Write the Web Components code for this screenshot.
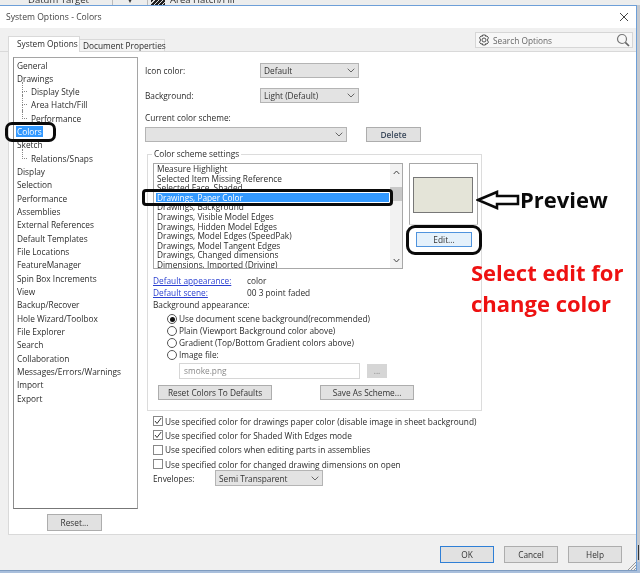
<!DOCTYPE html>
<html><head><meta charset="utf-8">
<style>
html,body{margin:0;padding:0}
body{width:640px;height:573px;overflow:hidden;background:linear-gradient(#c6c9ce 0 98%,#a9bfdc 98%);font:8.3px "Open Sans",sans-serif;color:#2b2b2b;position:relative}
sys-dialog,note-layer,top-strip{filter:blur(.3px)}
</style></head><body>
<top-strip></top-strip>
<sys-dialog>
  <span slot="title">System Options - Colors</span>
  <option-tree slot="tree">
    <tree-item>General</tree-item><tree-item>Drawings</tree-item>
    <tree-item child more>Display Style</tree-item><tree-item child more>Area Hatch/Fill</tree-item><tree-item child>Performance</tree-item>
    <tree-item selected>Colors</tree-item><tree-item>Sketch</tree-item><tree-item child>Relations/Snaps</tree-item>
    <tree-item>Display</tree-item><tree-item>Selection</tree-item><tree-item>Performance</tree-item><tree-item>Assemblies</tree-item>
    <tree-item>External References</tree-item><tree-item>Default Templates</tree-item><tree-item>File Locations</tree-item>
    <tree-item>FeatureManager</tree-item><tree-item>Spin Box Increments</tree-item><tree-item>View</tree-item>
    <tree-item>Backup/Recover</tree-item><tree-item>Hole Wizard/Toolbox</tree-item><tree-item>File Explorer</tree-item>
    <tree-item>Search</tree-item><tree-item>Collaboration</tree-item><tree-item>Messages/Errors/Warnings</tree-item>
    <tree-item>Import</tree-item><tree-item>Export</tree-item>
  </option-tree>
  <colors-panel slot="panel"></colors-panel>
</sys-dialog>
<note-layer></note-layer>
<script>
const def=(name,html)=>{customElements.define(name,class extends HTMLElement{
  constructor(){super();this.attachShadow({mode:'open'}).innerHTML=html;}
})};
const chevron=`<svg width="8" height="5" viewBox="0 0 8 5" style="margin-left:auto;flex:none"><path d="M.7.7 4 4 7.3.7" fill="none" stroke="#666" stroke-width="1"/></svg>`;

def('top-strip',`<style>
:host{display:flex;height:5px;overflow:hidden;background:#eceded;color:#333;font-size:9.5px;line-height:11px}
div{margin-top:-6px;white-space:nowrap}
.a{width:113px;padding-left:28px;box-sizing:border-box;border-right:1px solid #bbb}
.b{width:34px;border-right:1px solid #bbb;text-align:center;font-size:8px}
.c{width:14px;margin-left:3px;margin-top:0;height:5px;background:repeating-linear-gradient(135deg,#222 0 2px,#ddd 2px 3px)}
.d{padding-left:5px;flex:1}
</style><div class="a">Datum Target</div><div class="b">▾</div><div class="c"></div><div class="d">Area Hatch/Fill</div>`);

def('sys-dialog',`<style>
:host{display:block;position:relative;width:637px;height:566px;box-sizing:border-box;background:#f0f0f0;border-top:1px solid #6d9fd8;border-right:1px solid #6d9fd8;border-bottom:1px solid #7f9cc0}
.title{height:22px;background:#fff;display:flex;align-items:center;justify-content:space-between;padding:0 4px 0 6px;font-size:8.6px;color:#444}
.tabs{height:24px;display:flex;align-items:flex-end;padding-left:8px;box-sizing:border-box;border-bottom:1px solid #d9d9d9}
.tab{box-sizing:border-box;display:flex;align-items:center;white-space:nowrap}
.t1{width:72px;height:16px;background:#fff;border:1px solid #d9d9d9;border-bottom:0;margin-bottom:-1px;position:relative;padding:0 0 2px 8px}
.t2{width:85px;height:12px;background:#f4f4f4;border:1px solid #d9d9d9;border-left:0;border-bottom:0;padding-left:3px}
.search{margin-left:auto;margin-right:3px;margin-bottom:3px;width:158px;height:16px;box-sizing:border-box;background:#f7f7f7;border:1px solid #d6d6d6;display:flex;align-items:center;padding:0 2px;gap:3px;color:#666}
.search span{flex:1}
.body{height:483px;box-sizing:border-box;margin-left:8px;background:#fff;border-left:1px solid #d9d9d9;border-bottom:1px solid #d9d9d9;display:flex}
.left{width:136px;flex:none;box-sizing:border-box;padding:5px 0 0 4px;display:flex;flex-direction:column;align-items:flex-start}
.foot{display:flex;justify-content:flex-end;gap:10px;padding:11px 14px 0 0}
.grip{position:absolute;right:0;bottom:0}
</style>
<div class="title"><slot name="title"></slot><svg width="10" height="10" viewBox="0 0 10 10" style="margin-right:3px"><path d="M1 1 9 9M9 1 1 9" stroke="#444" stroke-width="1"/></svg></div>
<div class="tabs"><div class="tab t1">System Options</div><div class="tab t2">Document Properties</div>
<div class="search"><svg width="12" height="12" viewBox="0 0 12 12"><circle cx="6" cy="6" r="2" fill="none" stroke="#444" stroke-width=".9"/><path d="M4.600 1h2.800l.3 1.400 1.300-.5L10.600 4 9.600 5v2l1 1-1.600 2.100-1.300-.5L7.400 11H4.600l-.3-1.400-1.300.5L1.400 8l1-1V5l-1-1L3 1.900l1.300.5z" fill="none" stroke="#444" stroke-width=".9"/></svg><span>Search Options</span><svg width="14" height="14" viewBox="0 0 14 14"><circle cx="6" cy="6" r="4.500" fill="none" stroke="#777" stroke-width="1.200"/><path d="M9.300 9.300 13 13" stroke="#666" stroke-width="1.700"/></svg></div></div>
<div class="body"><div class="left"><slot name="tree"></slot><ui-btn style="margin:5px 0 0 34px;width:55px;height:17px">Reset...</ui-btn></div><slot name="panel"></slot></div>
<div class="foot"><ui-btn primary style="width:54px;height:17px">OK</ui-btn><ui-btn style="width:54px;height:17px">Cancel</ui-btn><ui-btn style="width:54px;height:17px">Help</ui-btn></div>
<svg class="grip" width="8" height="8" viewBox="0 0 8 8"><path d="M8 0 0 8M8 3 3 8M8 6 6 8" stroke="#999" stroke-width="1" fill="none"/></svg>`);

def('ui-btn',`<style>
:host{display:inline-flex;align-items:center;justify-content:center;box-sizing:border-box;background:#e1e1e1;border:1px solid #adadad;color:#333;flex:none}
:host([primary]){border:1px solid #2f7fd6;background:#e1e1e1}
:host([focus]){background:#e5f1fb;border:1px solid #4f93dd}
:host([off]){background:#d6d6d6;border-color:#d6d6d6;color:#888}
</style><slot></slot>`);

def('ui-select',`<style>
:host{display:flex;align-items:center;box-sizing:border-box;background:#e3e3e3;border:1px solid #b4b4b4;padding:0 3px 0 3px;flex:none;color:#333}
</style><slot></slot>${chevron}`);

def('option-tree',`<style>
:host{display:block;width:125px;height:452px;box-sizing:border-box;background:#fff;border:1px solid #a5a5a5;border-left:1.500px solid #8d8d8d;border-bottom:1px solid #777;padding-top:.500px}
</style><slot></slot>`);

def('tree-item',`<style>
:host{display:block;height:13.330px;line-height:13.330px;white-space:nowrap;padding-left:2px;position:relative}
:host([child]){padding-left:16px}
:host([child])::before{content:"";position:absolute;left:8px;top:-3px;height:10px;width:5px;border-left:1px dotted #888;border-bottom:1px dotted #888;box-sizing:border-box}
:host([more])::after{content:"";position:absolute;left:8px;top:6px;height:8px;border-left:1px dotted #888}
span{display:inline-block;line-height:11px;padding:0 1px}
:host([selected]) span{background:#3399ff;color:#fff}
</style><span><slot></slot></span>`);

def('ui-radio',`<style>
:host{display:flex;align-items:center;height:12px;gap:2px;white-space:nowrap}
i{width:8px;height:8px;border:1px solid #555;border-radius:50%;background:#fff;display:flex;align-items:center;justify-content:center;flex:none}
:host([on]) i::after{content:"";width:5px;height:5px;border-radius:50%;background:#111}
</style><i></i><slot></slot>`);

def('ui-check',`<style>
:host{display:flex;align-items:center;gap:2px;white-space:nowrap;height:14.300px}
i{width:8px;height:8px;border:1px solid #888;background:#fff;flex:none;display:block;position:relative}
svg{position:absolute;left:0;top:0;display:none}
:host([on]) svg{display:block}
</style><i><svg width="8" height="8" viewBox="0 0 8 8"><path d="M1 4 3 6.500 7.200 1" fill="none" stroke="#333" stroke-width="1"/></svg></i><slot></slot>`);

def('scheme-list',`<style>
:host{display:block;position:relative;width:250px;height:106px;box-sizing:border-box;border:1px solid #a8a8a8;overflow:hidden;background:#fff;flex:none}
.rows{padding:0 13px 0 2px}
.r{height:9.620px;line-height:9.620px;white-space:nowrap;padding-left:1px}
.sel{background:#3399ff;color:#fff}
.bar{position:absolute;right:0;top:0;bottom:0;width:12px;background:#f2f2f2;display:flex;flex-direction:column;align-items:center;justify-content:space-between;padding:6px 0 5px;box-sizing:border-box}
.thumb{position:absolute;left:0;right:0;top:23px;height:14px;background:#c8c8c8}
svg{position:relative}
</style><div class="rows">
<div class="r">Measure Highlight</div><div class="r">Selected Item Missing Reference</div><div class="r">Selected Face, Shaded</div>
<div class="r sel">Drawings, Paper Color</div><div class="r">Drawings, Background</div><div class="r">Drawings, Visible Model Edges</div>
<div class="r">Drawings, Hidden Model Edges</div><div class="r">Drawings, Model Edges (SpeedPak)</div><div class="r">Drawings, Model Tangent Edges</div>
<div class="r">Drawings, Changed dimensions</div><div class="r">Dimensions, Imported (Driving)</div></div>
<div class="bar"><div class="thumb"></div><svg width="7" height="5" viewBox="0 0 7 5"><path d="M.7 4 3.500 1 6.300 4" fill="none" stroke="#444"/></svg><svg width="7" height="5" viewBox="0 0 7 5"><path d="M.7 1 3.500 4 6.300 1" fill="none" stroke="#444"/></svg></div>`);

def('colors-panel',`<style>
:host{display:block;flex:1;padding:11px 0 0 0;box-sizing:border-box;white-space:nowrap}
.row{display:flex;align-items:center}
.lbl{width:115px;flex:none}
.group{position:relative;margin:12px 0 0 2px;width:335px;height:257px;box-sizing:border-box;border:1px solid #dcdcdc;padding:8px 0 0 5px}
.legend{position:absolute;left:4px;top:-7px;background:#fff;padding:0 2px;line-height:11px}
.top{display:flex;gap:6px}
.prev{width:69px;display:flex;flex-direction:column;flex:none}
.pv{height:62px;box-sizing:border-box;border:1px solid #a8a8a8;border-bottom:1px solid #ddd;padding:13px 4px 0 3px}
.sw{height:36px;box-sizing:border-box;background:#e4e4d8;border:1px solid #777}
a{color:#2a3fd0;text-decoration:underline;width:94px;display:block}
.lines{margin-top:6px;line-height:12px}
.radios{margin:2px 0 0 14px}
</style>
<div class="row"><span class="lbl">Icon color:</span><ui-select style="width:99px;height:15px">Default</ui-select></div>
<div class="row" style="margin-top:10px"><span class="lbl">Background:</span><ui-select style="width:99px;height:15px">Light (Default)</ui-select></div>
<div style="line-height:12px;margin-top:9px">Current color scheme:</div>
<div class="row" style="margin-top:3px"><ui-select style="width:202px;height:15px"></ui-select><ui-btn style="width:55px;height:15px;margin-left:19px;font-weight:600;color:#3c4a5c">Delete</ui-btn></div>
<div class="group"><span class="legend">Color scheme settings</span>
  <div class="top"><scheme-list></scheme-list>
    <div class="prev"><div class="pv"><div class="sw"></div></div><ui-btn focus style="width:56px;height:15px;margin:7px 0 0 7px">Edit...</ui-btn></div></div>
  <div class="lines">
    <div class="row"><a>Default appearance:</a><span>color</span></div>
    <div class="row"><a>Default scene:</a><span>00 3 point faded</span></div>
    <div>Background appearance:</div>
    <div class="radios"><ui-radio on>Use document scene background(recommended)</ui-radio><ui-radio>Plain (Viewport Background color above)</ui-radio><ui-radio>Gradient (Top/Bottom Gradient colors above)</ui-radio><ui-radio>Image file:</ui-radio></div>
    <div class="row" style="margin:2px 0 0 26px"><div style="width:181px;height:16px;box-sizing:border-box;border:1px solid #d6d6d6;color:#888;padding-left:4px;line-height:14px">smoke.png</div><ui-btn off style="width:20px;height:14px;margin-left:7px">...</ui-btn></div>
    <div class="row" style="margin:6px 0 0 5px"><ui-btn style="width:114px;height:15px">Reset Colors To Defaults</ui-btn><ui-btn style="width:94px;height:15px;margin-left:48px">Save As Scheme...</ui-btn></div>
  </div>
</div>
<div style="margin:3px 0 0 8px">
<ui-check on>Use specified color for drawings paper color (disable image in sheet background)</ui-check>
<ui-check on>Use specified color for Shaded With Edges mode</ui-check>
<ui-check>Use specified colors when editing parts in assemblies</ui-check>
<ui-check>Use specified color for changed drawing dimensions on open</ui-check>
<div class="row" style="margin-top:-1px"><span style="width:62px">Envelopes:</span><ui-select style="width:108px;height:16px">Semi Transparent</ui-select></div>
</div>`);

def('note-layer',`<style>
:host{position:absolute;inset:0;pointer-events:none;display:block}
.o{position:absolute;box-sizing:border-box;border:3px solid #0a0a0a}
.n{position:absolute;font-family:"Open Sans",sans-serif;font-weight:700;line-height:1;white-space:nowrap}
svg{position:absolute;left:476px;top:189px}
.e{position:absolute;left:638px;top:545px;width:1px;height:15px;background:#333}
</style>
<div class="o" style="left:5px;top:122px;width:51px;height:20px;border-radius:7px"></div>
<div class="o" style="left:142px;top:189px;width:251px;height:17px;border-radius:4px"></div>
<div class="o" style="left:406px;top:225px;width:76px;height:30px;border-radius:9px"></div>
<svg width="44" height="22" viewBox="0 0 44 22"><path d="M2 11 21 3V7H42V15H21V19Z" fill="#fff" stroke="#0a0a0a" stroke-width="2.500"/></svg>
<div class="n" style="left:520px;top:188px;font-size:22px;color:#0a0a0a">Preview</div>
<div class="n" style="left:471px;top:261px;font-size:22px;color:#ee1111">Select edit for</div>
<div class="n" style="left:471px;top:292px;font-size:22px;color:#ee1111">change color</div>
<div class="e"></div>`);
</script>
</body></html>
